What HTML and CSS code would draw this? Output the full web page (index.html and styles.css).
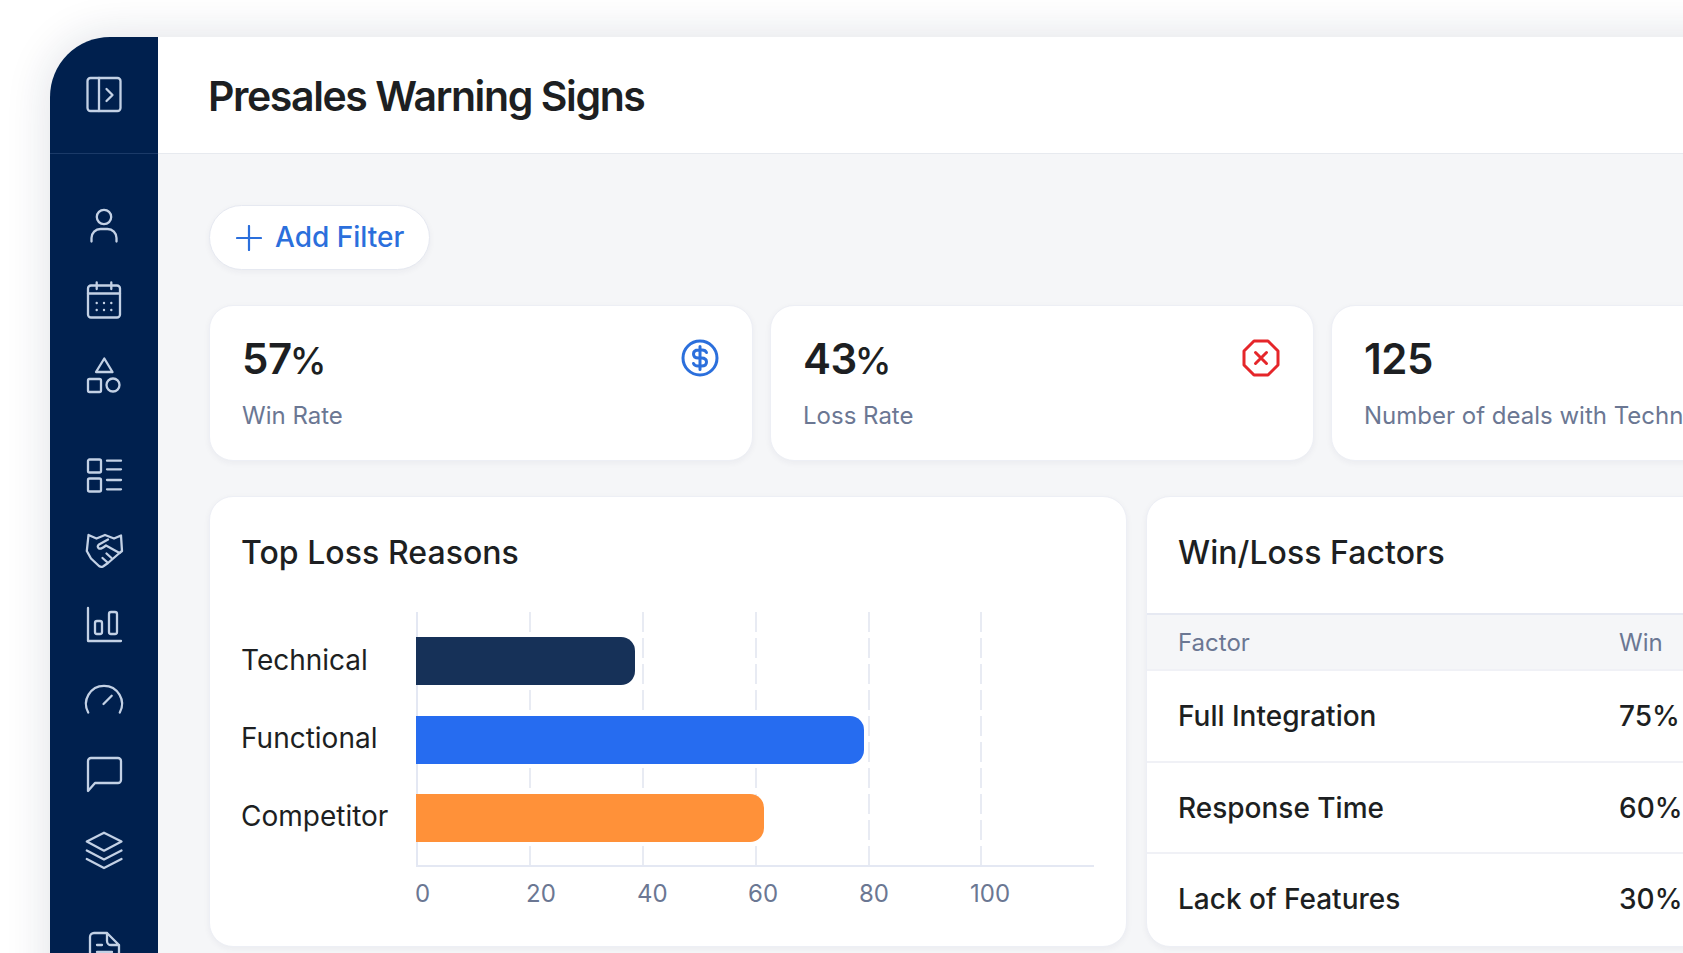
FILE: index.html
```html
<!DOCTYPE html>
<html lang="en">
<head>
<meta charset="utf-8">
<title>Presales Warning Signs</title>
<link rel="stylesheet" href="styles.css">
</head>
<body>
<div class="app">
  <aside class="sidebar">
    <div class="side-top">
      <svg class="ico" viewBox="0 0 36 36"><rect x="1.500" y="1" width="33" height="33" rx="3"/><path d="M13 1V34M20.500 12l6 6-6 6"/></svg>
    </div>
    <nav class="side-nav">
      <div class="side-group">
        <svg class="ico" viewBox="0 0 36 36"><circle cx="18" cy="10" r="7.200"/><path d="M5.500 34.500V31a9 9 0 0 1 9-9h7a9 9 0 0 1 9 9v3.500"/></svg>
        <svg class="ico" viewBox="0 0 36 36"><rect x="2" y="3.500" width="32" height="32" rx="3"/><path d="M2 11.500H34M10.700 .5V7M25.300 .5V7"/><path class="dots" d="M10.700 21h.01M18 21h.01M25.300 21h.01M10.700 28h.01M18 28h.01M25.300 28h.01"/></svg>
        <svg class="ico" viewBox="0 0 36 36"><path d="M18.300 1.500 26.500 15H10Z"/><rect x="2" y="22" width="13" height="13" rx="1.500"/><circle cx="27" cy="28" r="6.500"/></svg>
      </div>
      <div class="side-group">
        <svg class="ico" viewBox="0 0 36 36"><rect x="2" y="2.500" width="13" height="13" rx="1.500"/><rect x="2" y="21.500" width="13" height="13" rx="1.500"/><path d="M21 3.700H35M21 12.300H35M21 23H35M21 32.300H35"/></svg>
        <svg class="ico" viewBox="0 0 36 36"><path d="M2.500 3 10.500 6.500 19 3 28 6.500 35 3.500 36 19 33.500 21 22 31 17 34.500Q15 35.500 13 34L5 26.500 .8 19Z"/><path d="M22 7.500 13 12.500Q10.500 14.500 13 16.500 15 17.500 20 13.500L33.500 21M25.500 26 20.500 21.500M21 30 16.500 26"/></svg>
        <svg class="ico" viewBox="0 0 36 36"><path d="M2 1V34H35"/><rect x="9" y="14" width="7" height="13" rx="2"/><rect x="23" y="5" width="8" height="22" rx="2"/></svg>
        <svg class="ico" viewBox="0 0 36 36"><path d="M2.200 30.500A18 18 0 1 1 33.800 30.500M17.500 22 25.700 13.700"/></svg>
        <svg class="ico" viewBox="0 0 36 36"><path d="M2 34V4a3 3 0 0 1 3-3H32a3 3 0 0 1 3 3V23a3 3 0 0 1-3 3H9Z"/></svg>
        <svg class="ico" viewBox="0 0 36 36"><path d="M18 .7 35.500 9.500 18 18.700 .8 9.500ZM.8 18.500 18 27.500 35.500 18.500M.8 27 18 36 35.500 27"/></svg>
      </div>
      <div class="side-group">
        <svg class="ico" viewBox="0 0 36 36"><path d="M21 1H8a4 4 0 0 0-4 4V32a4 4 0 0 0 4 4H29a4 4 0 0 0 4-4V13ZM21 1V9a4 4 0 0 0 4 4H33M11 13H16M11 20H26"/></svg>
      </div>
    </nav>
  </aside>
  <div class="content">
    <header class="page-head"><h1>Presales Warning Signs</h1></header>
    <main class="page-body">
      <button class="add-filter" type="button">
        <svg class="plus" viewBox="0 0 26 26"><path d="M13 1V25M1 13H25"/></svg>
        <span>Add Filter</span>
      </button>
      <section class="stats">
        <article class="card stat">
          <div class="stat-row">
            <div class="stat-value">57<span class="pct">%</span></div>
            <svg class="stat-ico blue" viewBox="0 0 38 38"><circle cx="19" cy="19" r="17"/><path d="M25.500 13.500Q24.500 11 21 11H17.500Q12.500 11 12.500 15T17.500 19H20.500Q25.500 19 25.500 23T20.500 27H17Q13.500 27 12.500 24.500M19 7.500V30.500"/></svg>
          </div>
          <div class="stat-label">Win Rate</div>
        </article>
        <article class="card stat">
          <div class="stat-row">
            <div class="stat-value">43<span class="pct">%</span></div>
            <svg class="stat-ico red" viewBox="0 0 38 38"><path d="M12 2H26L36 12V26L26 36H12L2 26V12Z"/><path d="M13.500 13.500 24.500 24.500M24.500 13.500 13.500 24.500"/></svg>
          </div>
          <div class="stat-label">Loss Rate</div>
        </article>
        <article class="card stat">
          <div class="stat-row">
            <div class="stat-value">125</div>
          </div>
          <div class="stat-label">Number of deals with Technical</div>
        </article>
      </section>
      <section class="panels">
        <article class="card chart-card">
          <h2>Top Loss Reasons</h2>
          <div class="chart">
            <div class="bar-labels">
              <div>Technical</div>
              <div>Functional</div>
              <div>Competitor</div>
            </div>
            <div class="plot">
              <div class="grid-lines"><i></i><i></i><i></i><i></i><i></i></div>
              <div class="bar navy" style="width:219px"></div>
              <div class="bar blue-bar" style="width:448px"></div>
              <div class="bar orange" style="width:348px"></div>
            </div>
          </div>
          <div class="ticks"><span>0</span><span>20</span><span>40</span><span>60</span><span>80</span><span>100</span></div>
        </article>
        <article class="card table-card">
          <h2>Win/Loss Factors</h2>
          <div class="t-row t-head"><div>Factor</div><div>Win</div></div>
          <div class="t-row"><div>Full Integration</div><div>75%</div></div>
          <div class="t-row"><div>Response Time</div><div>60%</div></div>
          <div class="t-row"><div>Lack of Features</div><div>30%</div></div>
        </article>
      </section>
    </main>
  </div>
</div>
</body>
</html>
```
FILE: styles.css
```css
* { box-sizing: border-box; }
html, body { margin: 0; height: 953px; overflow: hidden; background: #fff; }
body { font-family: Inter, "Liberation Sans", sans-serif; color: #1d1f22; }

.app {
  display: flex;
  width: 1880px;
  height: 1000px;
  margin: 37px 0 0 50px;
  border-top-left-radius: 60px;
  box-shadow: 0 0 46px rgba(24, 34, 70, .14);
  background: #f5f6f8;
}

.sidebar {
  flex: 0 0 108px;
  background: #00204e;
  border-top-left-radius: 60px;
}
.side-top {
  height: 117px;
  padding: 40px 0 0 36px;
  border-bottom: 1px solid #1b3a68;
}
.side-nav { padding: 53px 0 0 36px; display: flex; flex-direction: column; gap: 64px; }
.side-group { display: flex; flex-direction: column; gap: 39px; }
.ico {
  display: block;
  width: 36px;
  height: 36px;
  overflow: visible;
  fill: none;
  stroke: #c3d1e5;
  stroke-width: 2.300;
  stroke-linecap: round;
  stroke-linejoin: round;
}
.ico .dots { stroke-width: 2.400; }

.content { flex: 1; min-width: 0; }
.page-head {
  height: 117px;
  padding: 2px 0 0 50px;
  display: flex;
  align-items: center;
  background: #fff;
  border-bottom: 1px solid #e7eaef;
}
h1 { margin: 0; font-size: 41px; font-weight: 600; letter-spacing: -1.400px; }

.page-body { padding: 51px 0 0 51px; }
.add-filter {
  display: flex;
  align-items: center;
  gap: 13px;
  height: 65px;
  padding: 0 25px 0 26px;
  margin: 0 0 35px;
  border: 1px solid #e6e9f1;
  border-radius: 33px;
  background: #fff;
  box-shadow: 0 2px 6px rgba(30, 40, 80, .05);
  font: 500 28px Inter, "Liberation Sans", sans-serif;
  color: #2b6fdc;
}
.add-filter span { padding-bottom: 2px; }
.plus { width: 26px; height: 26px; fill: none; stroke: #2b6fdc; stroke-width: 2.200; stroke-linecap: round; }

.card {
  background: #fff;
  border: 1px solid #edeff5;
  border-radius: 24px;
  box-shadow: 0 2px 6px rgba(30, 40, 80, .05);
}

.stats { display: flex; gap: 17px; margin-bottom: 35px; }
.stat { flex: 0 0 544px; height: 156px; padding: 27px 33px 0 32px; }
.stat-row { display: flex; justify-content: space-between; align-items: center; height: 50px; }
.stat-value { font-size: 42px; font-weight: 600; letter-spacing: -.5px; }
.pct { margin-left: -2px; font-size: 37px; font-weight: 500; }
.stat-label { margin-top: 17px; font-size: 24px; line-height: 32px; color: #6b7793; white-space: nowrap; }
.stat-ico { width: 38px; height: 38px; fill: none; stroke-width: 3; stroke-linecap: round; stroke-linejoin: round; }
.blue { stroke: #2b6fdc; }
.red { stroke: #e5262a; }

.panels { display: flex; gap: 19px; }
.chart-card { flex: 0 0 918px; height: 451px; padding: 33px 0 0 31px; }
h2 { margin: 0; font-size: 32px; line-height: 46px; font-weight: 450; letter-spacing: .05px; }
.chart { display: flex; margin-top: 36px; }
.bar-labels {
  flex: 0 0 175px;
  display: flex;
  flex-direction: column;
  gap: 30px;
  padding-top: 24px;
  font-size: 28px;
}
.bar-labels div { height: 48px; line-height: 48px; }
.plot {
  position: relative;
  width: 678px;
  height: 255px;
  padding-top: 25px;
  display: flex;
  flex-direction: column;
  gap: 30.500px;
  border-left: 2px solid #e4e8f3;
  border-bottom: 2px solid #e4e8f3;
}
.grid-lines { position: absolute; inset: 0; display: flex; }
.grid-lines i {
  flex: 0 0 112.900px;
  background: linear-gradient(#e8ebf3 20px, transparent 20px) right top / 2px 26px repeat-y;
}
.bar { position: relative; height: 48px; margin-left: -2px; border-radius: 0 14px 14px 0; }
.navy { background: #163158; }
.blue-bar { background: #266cf0; }
.orange { background: #ff9139; }
.ticks { display: flex; margin: 12px 0 0 174px; font-size: 24px; line-height: 30px; color: #6b7793; }
.ticks span { flex: 0 0 111px; }

.table-card { flex: 0 0 729px; height: 451px; padding-top: 33px; overflow: hidden; }
.table-card h2 { padding-left: 31px; margin-bottom: 37px; }
.t-row {
  display: grid;
  grid-template-columns: 441px 1fr;
  align-items: center;
  height: 91.500px;
  padding: 1px 0 0 31px;
  border-top: 2px solid #f0f1f6;
  font-size: 28px;
  font-weight: 450;
}
.t-head {
  height: 58px;
  padding-top: 0;
  background: #f5f6f8;
  border-top: 2px solid #e6e9f2;
  border-bottom: 2px solid #e6e9f2;
  margin-bottom: -2px;
  font-size: 24px;
  font-weight: 400;
  color: #6b7793;
}
```
